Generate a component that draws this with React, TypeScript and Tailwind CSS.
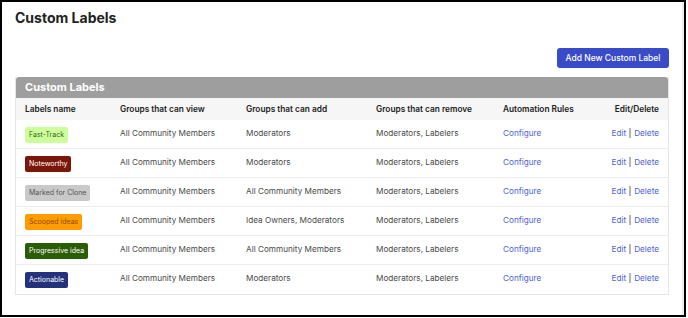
import React from 'react';

type Row = {
  name: string;
  badge: string;
  view: string;
  add: string;
  remove: string;
};

const rows: Row[] = [
  { name: 'Fast-Track', badge: 'bg-[#ccff99] text-[#3d5f25]', view: 'All Community Members', add: 'Moderators', remove: 'Moderators, Labelers' },
  { name: 'Noteworthy', badge: 'bg-[#7a1709] text-white', view: 'All Community Members', add: 'Moderators', remove: 'Moderators, Labelers' },
  { name: 'Marked for Clone', badge: 'bg-[#c9c9c9] text-[#555555]', view: 'All Community Members', add: 'All Community Members', remove: 'Moderators, Labelers' },
  { name: 'Scooped ideas', badge: 'bg-[#ff9c00] text-[#8c4d00]', view: 'All Community Members', add: 'Idea Owners, Moderators', remove: 'Moderators, Labelers' },
  { name: 'Progressive idea', badge: 'bg-[#2b5c07] text-white', view: 'All Community Members', add: 'All Community Members', remove: 'Moderators, Labelers' },
  { name: 'Actionable', badge: 'bg-[#24317c] text-white', view: 'All Community Members', add: 'Moderators', remove: 'Moderators, Labelers' },
];

const cols = 'grid grid-cols-[95px_126px_130px_127px_90px_1fr]';

export default function App() {
  return (
    <div className="w-[688px] h-[318px] bg-white" style={{ fontFamily: 'Inter, "Noto Sans", sans-serif' }}>
      <div className="w-[686px] h-[317px] border-2 border-black bg-white">
        <div className="h-full border-r-2 border-[#ececec]">
          <h1 className="pl-[13px] pt-[6px] text-[14px] leading-[19px] font-bold text-[#222]">Custom Labels</h1>

          <div className="w-[654px] ml-[13px] flex justify-end mt-[21px]">
            <button className="h-[20px] w-[112px] rounded-[3px] bg-[#3a4bc9] text-white text-[8.5px] font-medium">
              Add New Custom Label
            </button>
          </div>

          {/* table panel */}
          <div className="w-[654px] ml-[13px] mt-[9px] border border-[#e6e6e6] border-t-0">
            <div className="h-[21px] bg-[#9e9e9e] rounded-t-[3px] flex items-center px-[9px]">
              <span className="text-white text-[11px] font-bold">Custom Labels</span>
            </div>
            <div className={`${cols} h-[22px] bg-[#f6f6f6] items-center pl-[9px] pr-[9px] text-[8.3px] font-semibold text-[#222]`}>
              <span>Labels name</span>
              <span>Groups that can view</span>
              <span>Groups that can add</span>
              <span>Groups that can remove</span>
              <span>Automation Rules</span>
              <span className="text-right">Edit/Delete</span>
            </div>
            {rows.map((r, i) => (
              <div
                key={r.name}
                className={`${cols} h-[29px] items-start pl-[9px] pr-[9px] text-[8.2px] leading-[12px] text-[#4a4a4a] ${i < rows.length - 1 ? 'border-b border-[#ececec]' : ''}`}
              >
                <div className="pt-[7px]">
                  <span className={`inline-block h-[16px] leading-[16px] px-[4px] rounded-[2px] text-[7px] ${r.badge}`}>{r.name}</span>
                </div>
                <span className="pt-[7px]">{r.view}</span>
                <span className="pt-[7px]">{r.add}</span>
                <span className="pt-[7px]">{r.remove}</span>
                <span className="pt-[7px] text-[#4d62d6]">Configure</span>
                <span className="pt-[7px] flex justify-end items-center text-[#4d62d6]">
                  <span>Edit</span>
                  <span className="inline-block w-[2px] h-[10px] bg-[#b5b5b5] mx-[3px]" />
                  <span>Delete</span>
                </span>
              </div>
            ))}
          </div>
        </div>
      </div>
    </div>
  );
}
